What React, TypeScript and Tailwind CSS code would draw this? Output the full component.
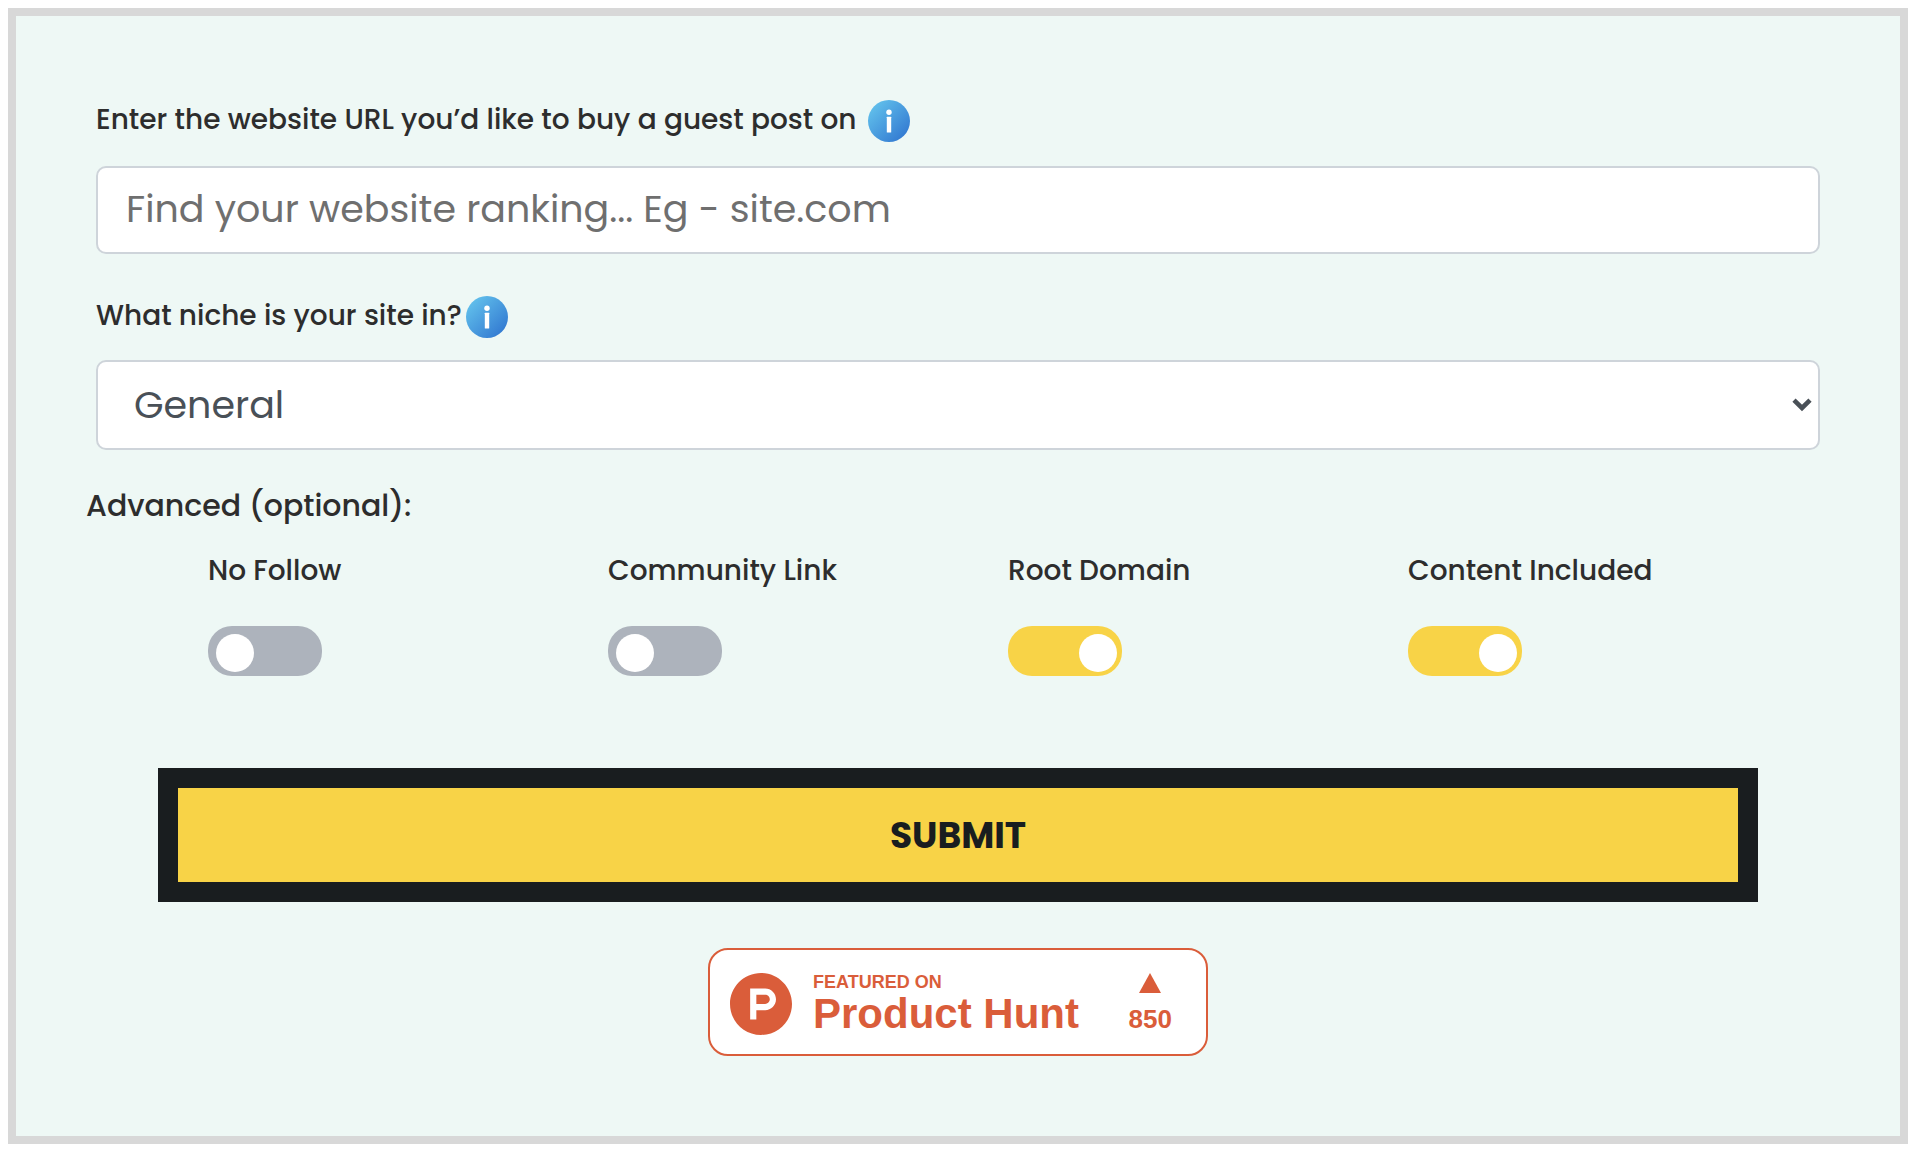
import { useId, useState } from 'react'
import { SiProducthunt } from 'react-icons/si'

const niches = ['General', 'Business', 'Technology', 'Health', 'Travel', 'Finance']

const advancedOptions = [
  { id: 'no-follow', label: 'No Follow', on: false },
  { id: 'community-link', label: 'Community Link', on: false },
  { id: 'root-domain', label: 'Root Domain', on: true },
  { id: 'content-included', label: 'Content Included', on: true },
]

function InfoIcon() {
  const gradientId = useId()

  return (
    <svg viewBox="0 0 42 42" className="size-[42px] shrink-0" aria-hidden="true">
      <defs>
        <linearGradient id={gradientId} x1="0.1" y1="0.1" x2="0.9" y2="0.9">
          <stop offset="0" stopColor="#62c1ec" />
          <stop offset="1" stopColor="#3279d1" />
        </linearGradient>
      </defs>
      <circle cx="21" cy="21" r="21" fill={`url(#${gradientId})`} />
      <circle cx="21" cy="12.2" r="2.7" fill="#fff" />
      <rect x="18.8" y="16.8" width="4.4" height="15.8" rx="0.4" fill="#fff" />
    </svg>
  )
}

interface ToggleProps {
  id: string
  label: string
  defaultOn: boolean
}

function Toggle({ id, label, defaultOn }: ToggleProps) {
  const [on, setOn] = useState(defaultOn)

  return (
    <div className="flex flex-col items-start gap-[34px] pl-[50px]">
      <label htmlFor={id} className="text-[28px] leading-[42px] font-medium">
        {label}
      </label>
      <input
        id={id}
        type="checkbox"
        role="switch"
        checked={on}
        onChange={e => setOn(e.target.checked)}
        className="h-[50px] w-[114px] cursor-pointer appearance-none rounded-3xl bg-[#adb3bc] px-2 pt-2 before:block before:size-[38px] before:rounded-full before:bg-white checked:bg-[#f8d347] checked:pr-[5px] checked:before:ml-auto"
      />
    </div>
  )
}

function ProductHuntBadge() {
  return (
    <a
      href="#product-hunt"
      className="flex h-[108px] w-[500px] items-center rounded-[20px] border-2 border-[#da5d3a] bg-white pt-1 pr-[34px] pl-5 font-['Liberation_Sans',Arial,sans-serif] font-bold text-[#da5d3a]"
    >
      <SiProducthunt className="size-[62px]" aria-hidden="true" />
      <span className="ml-[21px] flex flex-col">
        <span className="text-lg leading-5">FEATURED ON</span>
        <span className="text-[42px] leading-11">Product Hunt</span>
      </span>
      <span className="ml-auto flex flex-col items-center gap-2.5">
        <svg viewBox="0 0 22 20" className="h-5 w-[22px]" fill="currentColor" aria-hidden="true">
          <path d="M11 0 22 20H0z" />
        </svg>
        <span className="text-[26px] leading-8">850</span>
      </span>
    </a>
  )
}

export default function App() {
  const [url, setUrl] = useState('')
  const [niche, setNiche] = useState('General')

  return (
    <main className="min-h-screen bg-white py-2 pr-2.5 pl-2 font-[Poppins,Inter,sans-serif] text-[#2d2d2d]">
      <form
        onSubmit={e => e.preventDefault()}
        className="flex flex-col border-8 border-[#d8d8d8] bg-[#eef8f5] pt-[84px] pb-20"
      >
        <div className="flex flex-col px-20">
          <div className="flex items-start gap-[11px]">
            <label htmlFor="site-url" className="text-[28px] leading-10 font-medium">
              Enter the website URL you’d like to buy a guest post on
            </label>
            <InfoIcon />
          </div>
          <input
            id="site-url"
            type="text"
            value={url}
            onChange={e => setUrl(e.target.value)}
            placeholder="Find your website ranking... Eg - site.com"
            className="mt-6 h-[88px] w-full rounded-[10px] border-2 border-[#ced4da] bg-white px-7 pb-1 text-[38px] text-[#495057] placeholder:text-[#6f6f6f]"
          />

          <div className="mt-[42px] flex items-start gap-1">
            <label htmlFor="niche" className="text-[28px] leading-10 font-medium">
              What niche is your site in?
            </label>
            <InfoIcon />
          </div>
          <div className="relative mt-[22px]">
            <select
              id="niche"
              value={niche}
              onChange={e => setNiche(e.target.value)}
              className="block h-[90px] w-full appearance-none rounded-[10px] border-2 border-[#ced4da] bg-white px-9 pb-0.5 text-[38px] text-[#495057]"
            >
              {niches.map(n => (
                <option key={n}>{n}</option>
              ))}
            </select>
            <svg
              viewBox="0 0 20 14"
              className="pointer-events-none absolute top-[38px] right-2 h-3.5 w-5"
              fill="none"
              stroke="#495057"
              strokeWidth="4.6"
              aria-hidden="true"
            >
              <path d="M2 2.2 10 10 18 2.2" />
            </svg>
          </div>
        </div>

        <fieldset className="mt-8 px-[70px]">
          <legend className="text-[30px] leading-12 font-medium">Advanced (optional):</legend>
          <div className="mt-5 grid grid-cols-4 px-[72px]">
            {advancedOptions.map(o => (
              <Toggle key={o.id} id={o.id} label={o.label} defaultOn={o.on} />
            ))}
          </div>
        </fieldset>

        <div className="mt-[92px] flex px-[142px]">
          <button
            type="submit"
            className="h-[134px] w-full cursor-pointer border-20 border-[#191d1f] bg-[#f8d347] pt-0.5 text-4xl font-bold text-[#191d1f]"
          >
            SUBMIT
          </button>
        </div>

        <div className="mt-[46px] flex justify-center">
          <ProductHuntBadge />
        </div>
      </form>
    </main>
  )
}
